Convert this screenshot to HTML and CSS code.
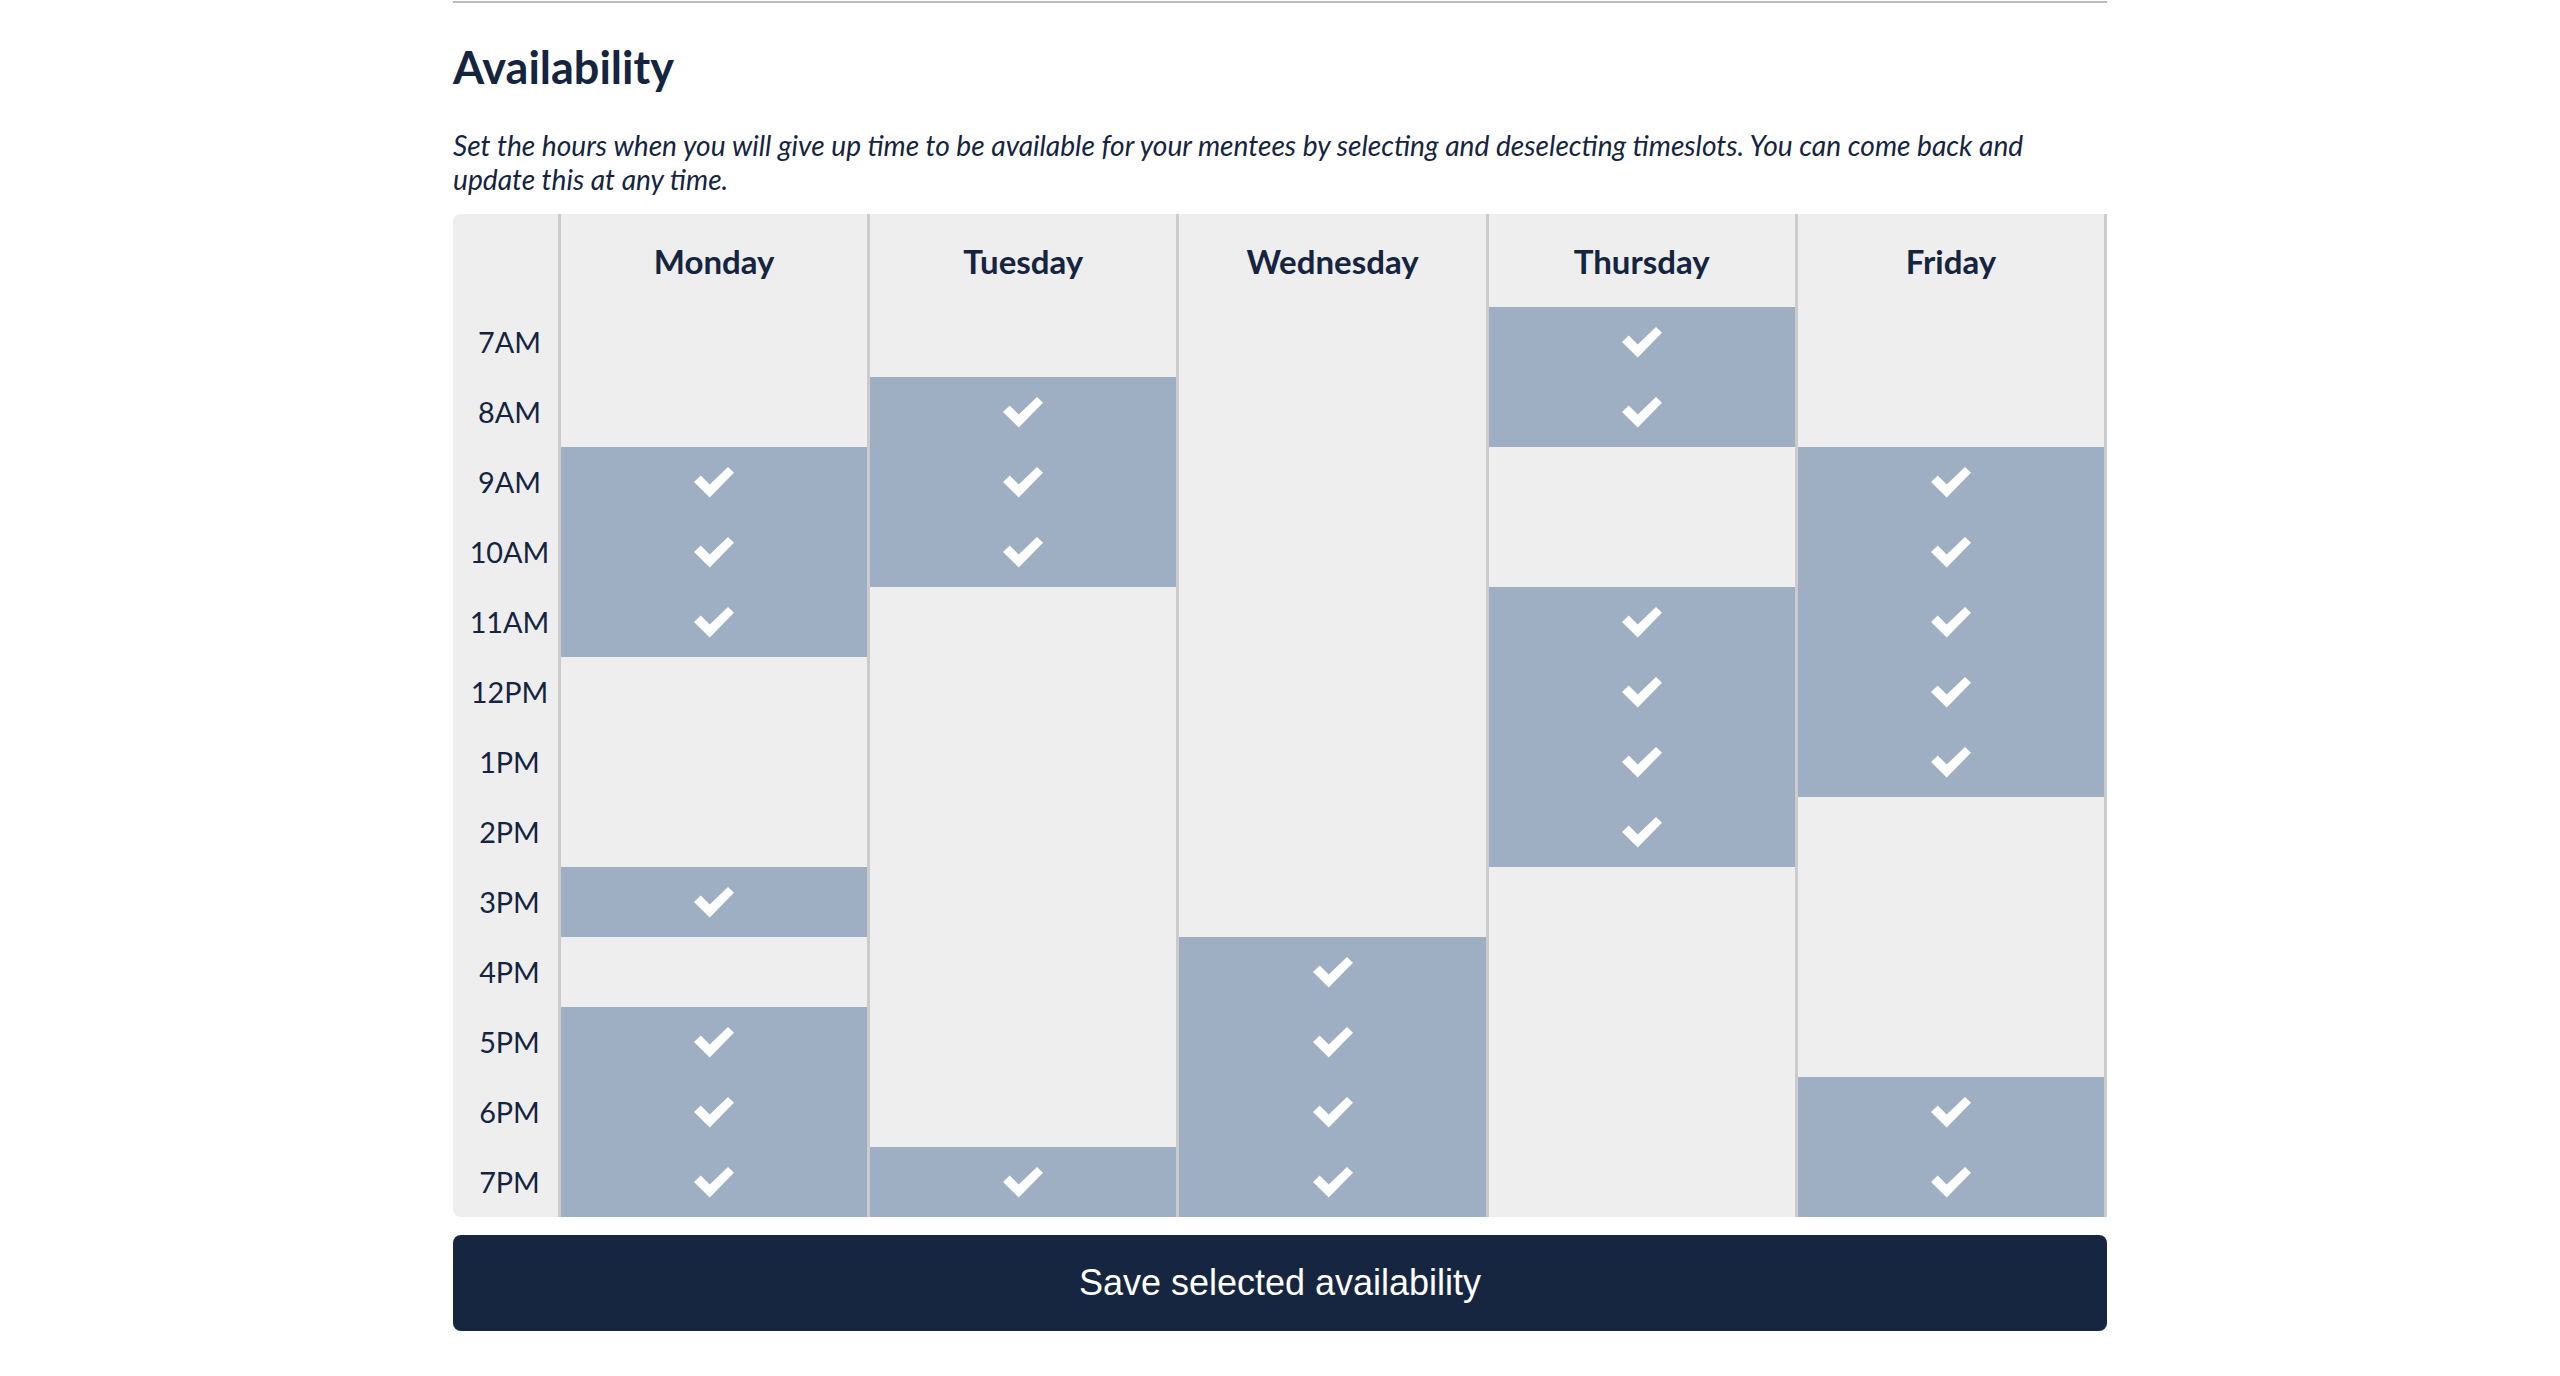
FILE: index.html
```html
<!DOCTYPE html>
<html lang="en">
<head>
    <meta charset="UTF-8">
    <meta name="viewport" content="width=device-width, initial-scale=1.0">
    <title>Availability</title>
    <link rel="stylesheet" href="styles.css">
</head>
<body>

<div class="container">
    <h2>Availability</h2>
    <p class="intro">Set the hours when you will give up time to be available for your mentees by selecting and deselecting timeslots. You can come back and update this at any time.</p>

    <div class="schedule" id="schedule">
        <div class="times" id="times">
            <div class="head"></div>
        </div>
        <!-- Kolom hari dibuat lewat script -->
    </div>

    <button class="button" id="saveAvailability">Save selected availability</button>
</div>

<script>
    const hours = ['7AM', '8AM', '9AM', '10AM', '11AM', '12PM', '1PM', '2PM', '3PM', '4PM', '5PM', '6PM', '7PM'];
    const days = {
        Monday: ['9AM', '10AM', '11AM', '3PM', '5PM', '6PM', '7PM'],
        Tuesday: ['8AM', '9AM', '10AM', '7PM'],
        Wednesday: ['4PM', '5PM', '6PM', '7PM'],
        Thursday: ['7AM', '8AM', '11AM', '12PM', '1PM', '2PM'],
        Friday: ['9AM', '10AM', '11AM', '12PM', '1PM', '6PM', '7PM']
    };
    const check = '<svg class="check" viewBox="0 0 40 31"><polygon points="0,15 6.7,8.5 15.7,17.5 34,0 40,5.8 15.7,30.5" fill="#fff"/></svg>';

    const schedule = document.getElementById('schedule');
    const times = document.getElementById('times');

    hours.forEach(h => {
        const cell = document.createElement('div');
        cell.className = 'time';
        cell.textContent = h;
        times.appendChild(cell);
    });

    Object.keys(days).forEach(day => {
        const col = document.createElement('div');
        col.className = 'day';
        const head = document.createElement('div');
        head.className = 'head';
        head.textContent = day;
        col.appendChild(head);

        hours.forEach(h => {
            const slot = document.createElement('div');
            slot.className = 'slot';
            if (days[day].includes(h)) {
                slot.classList.add('selected');
                slot.innerHTML = check;
            }
            // Klik untuk pilih / batal pilih
            slot.addEventListener('click', function () {
                slot.classList.toggle('selected');
                slot.innerHTML = slot.classList.contains('selected') ? check : '';
            });
            col.appendChild(slot);
        });

        schedule.appendChild(col);
    });
</script>

</body>
</html>
```

FILE: styles.css
```css
body {
    font-family: Lato, 'Noto Sans', sans-serif;
    color: #15243f;
    background-color: #fff;
    margin: 0;
    padding: 0;
}
.container {
    width: 1654px;
    margin: 1px auto 0;
    border-top: 2px solid #bdbdbd;
}
h2 {
    font-size: 45px;
    font-weight: 700;
    line-height: 54px;
    margin: 37px 0 34px;
}
.intro {
    font-size: 28.15px;
    font-style: italic;
    line-height: 34px;
    margin: 0 0 18px;
}
.schedule {
    display: flex;
    background-color: #eee;
    border-radius: 8px 0 0 8px;
}
.times {
    width: 105px;
    flex-shrink: 0;
}
.head {
    height: 93px;
    display: flex;
    align-items: center;
    justify-content: center;
    font-size: 33px;
    font-weight: 700;
}
.time, .slot {
    height: 70px;
    display: flex;
    align-items: center;
    justify-content: center;
}
.time {
    font-size: 28.8px;
    padding-left: 8px;
}
.day {
    flex: 1;
    border-left: 3px solid #cbcbcb;
}
.day:last-child {
    border-right: 3px solid #cbcbcb;
}
.slot {
    cursor: pointer;
}
.slot.selected {
    background-color: #9eaec3;
}
.check {
    width: 40px;
    height: 31px;
}
.button {
    display: block;
    width: 100%;
    height: 96px;
    margin-top: 18px;
    background-color: #162641;
    color: white;
    border: none;
    border-radius: 8px;
    cursor: pointer;
    font-family: 'Liberation Sans', Arial, sans-serif;
    font-size: 36px;
}
.button:hover {
    background-color: #1f3354;
}
```
